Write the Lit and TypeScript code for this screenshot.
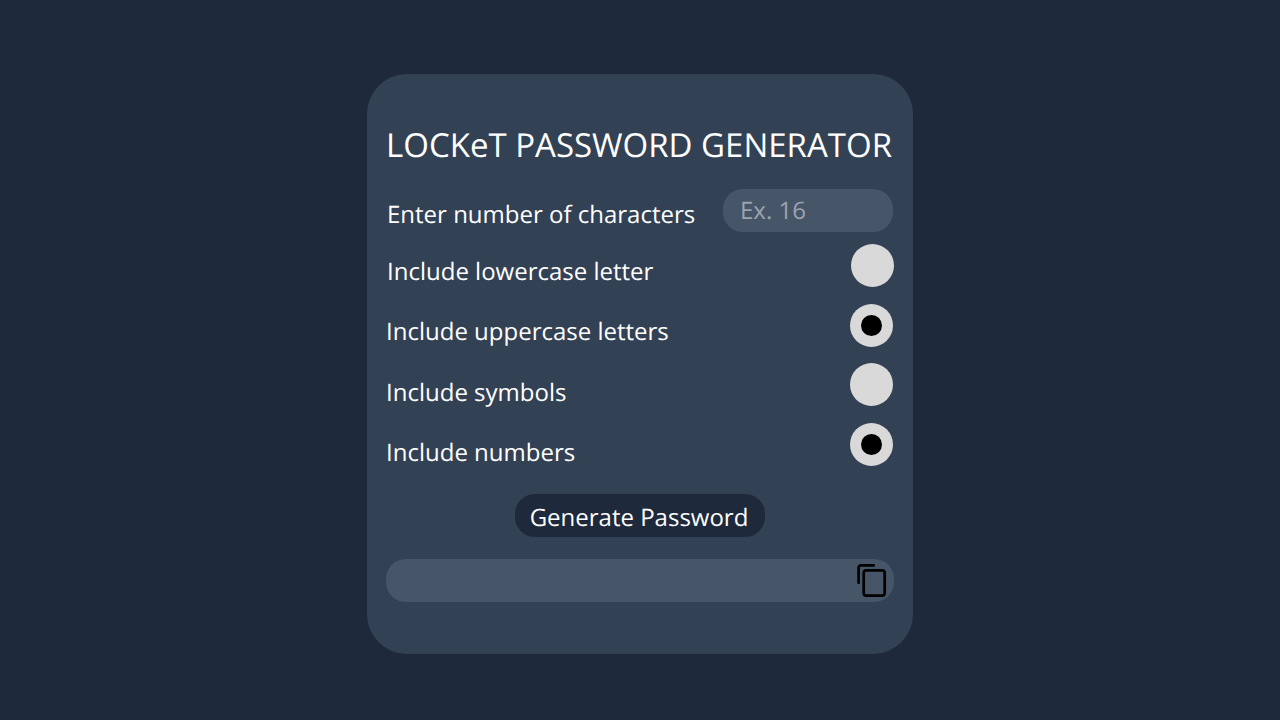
import { LitElement, html, css } from "lit";
import { customElement, state } from "lit/decorators.js";

interface Option {
  id: string;
  label: string;
  checked: boolean;
}

@customElement("app-root")
export class AppRoot extends LitElement {
  static styles = css`
    :host {
      display: flex;
      justify-content: center;
      height: 720px;
      box-sizing: border-box;
      padding-top: 74px;
      background: #1e293b;
      color: #fff;
      font-family: "Open Sans", "Noto Sans", sans-serif;
      font-size: 24px;
      line-height: 35px;
      text-rendering: geometricPrecision;
      overflow: hidden;
    }
    .card {
      display: flex;
      flex-direction: column;
      box-sizing: border-box;
      width: 546px;
      height: 580px;
      padding: 48px 19px 0;
      border-radius: 40px;
      background: #334155;
    }
    .title {
      margin: 0;
      font-size: 33px;
      font-weight: 400;
      line-height: 45px;
      white-space: nowrap;
    }
    .row {
      display: flex;
      justify-content: space-between;
      height: 43px;
      white-space: nowrap;
    }
    .length {
      margin-top: 22px;
      padding-left: 1px;
    }
    .label {
      padding-top: 8px;
    }
    .field {
      box-sizing: border-box;
      width: 170px;
      margin-right: 1px;
      padding: 4px 17px;
      border-radius: 20px;
      background: #475569;
      color: #9ca3af;
    }
    .lowercase { margin-top: 12px; padding-left: 1px; }
    .uppercase { margin-top: 17px; padding-right: 1px; }
    .symbols { margin-top: 16px; padding-right: 1px; }
    .numbers { margin-top: 17px; padding-right: 1px; }
    .symbols .label { padding-top: 12px; }
    .numbers .label { padding-top: 12px; }
    .lowercase .label { padding-top: 10px; }
    .uppercase .label { padding-top: 10px; }
    .radio {
      display: flex;
      align-items: center;
      justify-content: center;
      width: 43px;
      height: 43px;
      border-radius: 50%;
      background: #d9d9d9;
    }
    .dot {
      width: 21px;
      height: 21px;
      border-radius: 50%;
      background: #000;
    }
    .generate {
      align-self: center;
      box-sizing: border-box;
      width: 250px;
      height: 43px;
      margin-top: 28px;
      padding: 6px 2px 0 0;
      border-radius: 20px;
      background: #1e293b;
      text-align: center;
      white-space: nowrap;
    }
    .result {
      display: flex;
      justify-content: flex-end;
      align-items: center;
      box-sizing: border-box;
      height: 43px;
      margin-top: 22px;
      padding-right: 4px;
      border-radius: 20px;
      background: #475569;
    }
    .copy {
      display: block;
      width: 36px;
      height: 43px;
    }
  `;

  @state() private options: Option[] = [
    { id: "lowercase", label: "Include lowercase letter", checked: false },
    { id: "uppercase", label: "Include uppercase letters", checked: true },
    { id: "symbols", label: "Include symbols", checked: false },
    { id: "numbers", label: "Include numbers", checked: true },
  ];

  private toggle(id: string) {
    this.options = this.options.map((o) => (o.id === id ? { ...o, checked: !o.checked } : o));
  }

  render() {
    return html`
      <main class="card">
        <h1 class="title">LOCKeT PASSWORD GENERATOR</h1>
        <div class="row length">
          <span class="label">Enter number of characters</span>
          <div class="field">Ex. 16</div>
        </div>
        ${this.options.map(
          (o) => html`<div class="row ${o.id}" @click=${() => this.toggle(o.id)}>
            <span class="label">${o.label}</span>
            <span class="radio">${o.checked ? html`<span class="dot"></span>` : ""}</span>
          </div>`
        )}
        <div class="generate">Generate Password</div>
        <div class="result">
          <svg class="copy" viewBox="854 559 36 43" fill="none" stroke="#000" stroke-width="2.7" stroke-linecap="round">
            <path d="M858.6 582.7V567.9Q858.6 565.3 861.2 565.3H873.8" />
            <rect x="863.7" y="570.3" width="21" height="25.4" rx="2.6" />
          </svg>
        </div>
      </main>
    `;
  }
}
